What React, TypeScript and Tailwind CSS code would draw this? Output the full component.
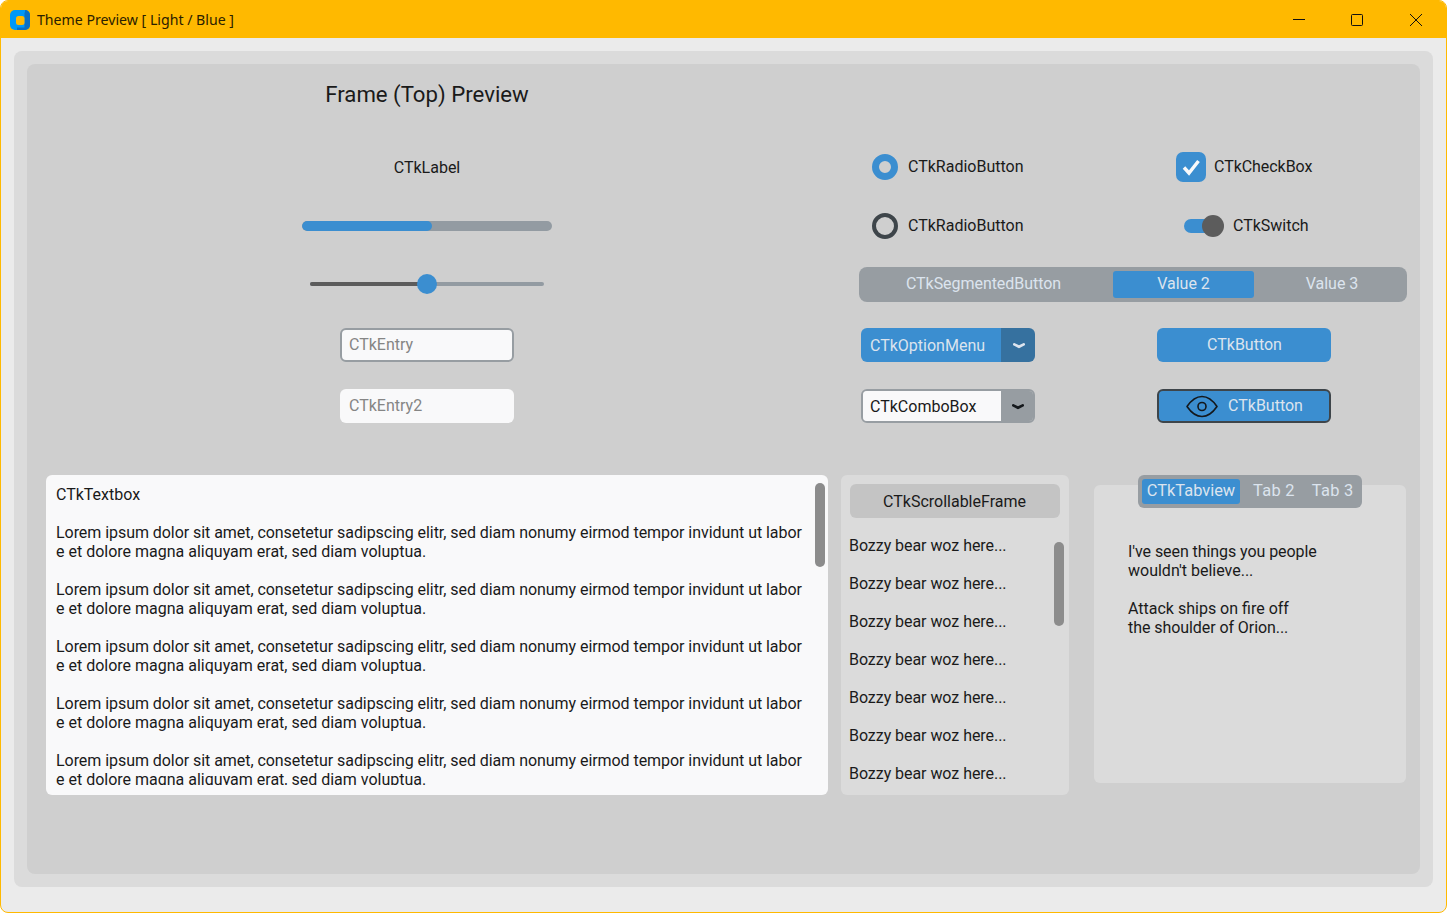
const roboto = { fontFamily: "Roboto, sans-serif" };

const lorem = [1, 2, 3, 4, 5];
const bears = [1, 2, 3, 4, 5, 6, 7];

const Chevron = ({ color }: { color: string }) => (
  <svg width="12" height="6" viewBox="0 0 12 6" fill="none">
    <path d="M1.3 1.4 L6 3.8 L10.7 1.4" stroke={color} strokeWidth="2.7" strokeLinecap="round" strokeLinejoin="round" />
  </svg>
);

const EyeIcon = () => (
  <svg width="33" height="23" viewBox="0 0 33 23" fill="none" stroke="#14181c" strokeWidth="1.6">
    <path d="M2 11.5 C7.5 3.5 12 1.5 17 1.5 C22 1.5 26.5 3.5 32 11.5 C26.5 19.5 22 21.5 17 21.5 C12 21.5 7.5 19.5 2 11.5 Z" strokeLinejoin="round" />
    <circle cx="17" cy="11.5" r="4" />
  </svg>
);

const AppIcon = () => (
  <svg width="20" height="20" viewBox="0 0 20 20">
    <rect width="20" height="20" rx="5" fill="#0098f8" />
    <path d="M15 0 A5 5 0 0 1 20 5 V15 A5 5 0 0 1 15 20 H7 V17.5 H14.5 V2.5 H15 Z" fill="#0a6fc4" />
    <rect x="6" y="6" width="8.5" height="9" rx="2.5" fill="#ffb900" />
  </svg>
);

export default function App() {
  return (
    <div className="w-[1447px] h-[913px] flex flex-col overflow-hidden rounded-[8px] border border-[#ffb900] bg-[#ebebeb]" style={roboto}>
      <div className="h-[37px] shrink-0 flex items-center bg-[#ffb900] pl-[9px]">
        <AppIcon />
        <span className="ml-[7px] text-[14.15px] text-[#2a2000] whitespace-nowrap" style={{ fontFamily: "'Noto Sans', sans-serif" }}>
          Theme Preview [ Light / Blue ]
        </span>
        <div className="ml-auto flex items-center">
          <svg className="mr-[46px]" width="12" height="12" viewBox="0 0 12 12"><path d="M0 5.5 H12" stroke="#111" strokeWidth="1" /></svg>
          <svg className="mr-[47px]" width="12" height="12" viewBox="0 0 12 12" fill="none"><rect x="0.5" y="0.5" width="11" height="11" rx="1" stroke="#111" strokeWidth="1" /></svg>
          <svg className="mr-[24px]" width="12" height="12" viewBox="0 0 12 12" fill="none"><path d="M0 0 L12 12 M12 0 L0 12" stroke="#111" strokeWidth="1" /></svg>
        </div>
      </div>

      <div className="flex-1 p-[13px] pb-[25px]">
        <div className="h-full rounded-[8px] bg-[#dbdbdb] p-[13px]">
          <div className="h-full rounded-[8px] bg-[#cfcfcf] text-[16px] leading-[19px] text-[#1a1a1a]">
            {/* top: widgets */}
            <div className="h-[411px] flex">
              <div className="w-[800px] flex flex-col items-center">
                <div className="mt-[15px] h-[30px] flex items-center text-[22.2px]">Frame (Top) Preview</div>
                <div className="mt-[41px] h-[34px] flex items-center">CTkLabel</div>
                <div className="mt-[25px] h-[34px] flex items-center">
                  <div className="w-[250px] h-[10px] rounded-full bg-[#939ba2] overflow-hidden">
                    <div className="w-[130px] h-full rounded-full bg-[#3b8ed0]" />
                  </div>
                </div>
                <div className="mt-[24px] h-[34px] flex items-center">
                  <div className="w-[234px] h-[4px] rounded-full bg-[#939ba2] relative">
                    <div className="w-[117px] h-full rounded-full bg-[#5c5c5c]" />
                    <div className="absolute left-[107px] top-[-8px] w-[20px] h-[20px] rounded-full bg-[#3b8ed0]" />
                  </div>
                </div>
                <div className="mt-[27px] w-[174px] h-[34px] flex items-center rounded-[6px] border-2 border-[#979da2] bg-[#f9f9fa] pl-[7px] pb-[2px] text-[#858585]">CTkEntry</div>
                <div className="mt-[27px] w-[174px] h-[34px] flex items-center rounded-[6px] bg-[#f9f9fa] pl-[9px] pb-[2px] text-[#858585]">CTkEntry2</div>
              </div>

              <div className="flex-1 pt-[86px]">
                <div className="h-[34px] flex items-center">
                  <div className="w-[349px] pl-[45px] flex items-center">
                    <div className="w-[26px] h-[26px] rounded-full border-[7px] border-[#3b8ed0]" />
                    <span className="ml-[10px] mb-[2px]">CTkRadioButton</span>
                  </div>
                  <div className="w-[30px] h-[30px] rounded-[7px] bg-[#3b8ed0]">
                    <svg width="30" height="30" viewBox="0 0 30 30" fill="none">
                      <path d="M8 15.5 L13 21 L22.5 9" stroke="#f9f9fa" strokeWidth="3.4" />
                    </svg>
                  </div>
                  <span className="ml-[8px] mb-[2px] tracking-[-0.05px]">CTkCheckBox</span>
                </div>
                <div className="mt-[25px] h-[34px] flex items-center">
                  <div className="w-[357px] pl-[45px] flex items-center">
                    <div className="w-[26px] h-[26px] rounded-full border-[4px] border-[#3e454a]" />
                    <span className="ml-[10px] mb-[2px]">CTkRadioButton</span>
                  </div>
                  <div className="w-[40px] h-[22px] flex items-center relative">
                    <div className="w-[30px] h-[14px] rounded-full bg-[#3b8ed0]" />
                    <div className="absolute left-[18px] top-0 w-[22px] h-[22px] rounded-full bg-[#5c5c5c]" />
                  </div>
                  <span className="ml-[9px] mb-[2px]">CTkSwitch</span>
                </div>
                <div className="mt-[24px] ml-[32px] w-[548px] h-[35px] flex items-center rounded-[8px] bg-[#979da2] text-[#dce4ee]">
                  <div className="w-[254px] pr-[5px] mb-[2px] text-center tracking-[-0.05px]">CTkSegmentedButton</div>
                  <div className="w-[141px] h-[27px] pb-[2px] rounded-[3px] bg-[#3b8ed0] flex items-center justify-center">Value 2</div>
                  <div className="flex-1 pl-[3px] mb-[2px] text-center">Value 3</div>
                </div>
                <div className="mt-[26px] ml-[34px] flex">
                  <div className="w-[174px] h-[34px] flex rounded-[6px] overflow-hidden text-[#dce4ee]">
                    <div className="w-[140px] bg-[#3b8ed0] flex items-center pl-[9px]">CTkOptionMenu</div>
                    <div className="flex-1 bg-[#36719f] flex items-center justify-center pl-[2px] pt-[2px]"><Chevron color="#dce4ee" /></div>
                  </div>
                  <div className="ml-[122px] w-[174px] h-[34px] pl-[1px] pb-[2px] rounded-[6px] bg-[#3b8ed0] text-[#dce4ee] flex items-center justify-center">CTkButton</div>
                </div>
                <div className="mt-[27px] ml-[34px] flex">
                  <div className="w-[174px] h-[34px] flex rounded-[6px] overflow-hidden border-2 border-[#979da2]">
                    <div className="w-[138px] bg-[#f9f9fa] flex items-center pl-[7px]">CTkComboBox</div>
                    <div className="flex-1 bg-[#979da2] flex items-center justify-center pl-[2px] pt-[2px]"><Chevron color="#14181c" /></div>
                  </div>
                  <div className="ml-[122px] w-[174px] h-[34px] rounded-[6px] border-2 border-[#3e454a] bg-[#3b8ed0] text-[#dce4ee] flex items-center justify-center gap-[10px]">
                    <EyeIcon />
                    <span className="mb-[2px]">CTkButton</span>
                  </div>
                </div>
              </div>
            </div>

            {/* bottom: textbox, scrollable frame, tabview */}
            <div className="flex pl-[19px]">
              <div className="relative w-[782px] h-[320px] rounded-[6px] bg-[#f9f9fa] pl-[10px] pt-[10px]">
                <div className="h-[300px] overflow-hidden">
                  <div>CTkTextbox</div>
                  {lorem.map((n) => (
                    <div key={n} className="mt-[19px] whitespace-nowrap">
                      <div className="tracking-[-0.055px]">Lorem ipsum dolor sit amet, consetetur sadipscing elitr, sed diam nonumy eirmod tempor invidunt ut labor</div>
                      <div>e et dolore magna aliquyam erat, sed diam voluptua.</div>
                    </div>
                  ))}
                </div>
                <div className="absolute left-[769px] top-[8px] w-[10px] h-[84px] rounded-full bg-[#8c8c8c]" />
              </div>

              <div className="relative ml-[13px] w-[228px] h-[320px] rounded-[6px] bg-[#dbdbdb] px-[9px] pt-[9px]">
                <div className="w-[210px] h-[34px] pr-[1px] rounded-[6px] bg-[#c4c4c4] flex items-center justify-center">CTkScrollableFrame</div>
                <div className="mt-[8px] -ml-px tracking-[-0.05px]">
                  {bears.map((n) => (
                    <div key={n} className="h-[38px] flex items-center">Bozzy bear woz here...</div>
                  ))}
                </div>
                <div className="absolute left-[213px] top-[67px] w-[10px] h-[84px] rounded-full bg-[#8c8c8c]" />
              </div>

              <div className="ml-[25px] w-[312px] h-[298px] mt-[10px] rounded-[6px] bg-[#dbdbdb] flex flex-col">
                <div className="-mt-[10px] self-center w-[224px] h-[33px] rounded-[6px] bg-[#979da2] flex items-center pl-[4px] text-[16.4px] text-[#dce4ee]">
                  <div className="w-[98px] h-[25px] pb-[2px] rounded-[3px] bg-[#3b8ed0] flex items-center justify-center">CTkTabview</div>
                  <div className="ml-[13px] mb-[2px] tracking-[0.3px]">Tab 2</div>
                  <div className="ml-[17px] mb-[2px] tracking-[0.3px]">Tab 3</div>
                </div>
                <div className="mt-[34px] pl-[34px]">
                  <div className="tracking-[-0.07px]">I've seen things you people</div>
                  <div>wouldn't believe...</div>
                  <div className="mt-[19px]">Attack ships on fire off</div>
                  <div className="tracking-[-0.07px]">the shoulder of Orion...</div>
                </div>
              </div>
            </div>
          </div>
        </div>
      </div>
    </div>
  );
}
